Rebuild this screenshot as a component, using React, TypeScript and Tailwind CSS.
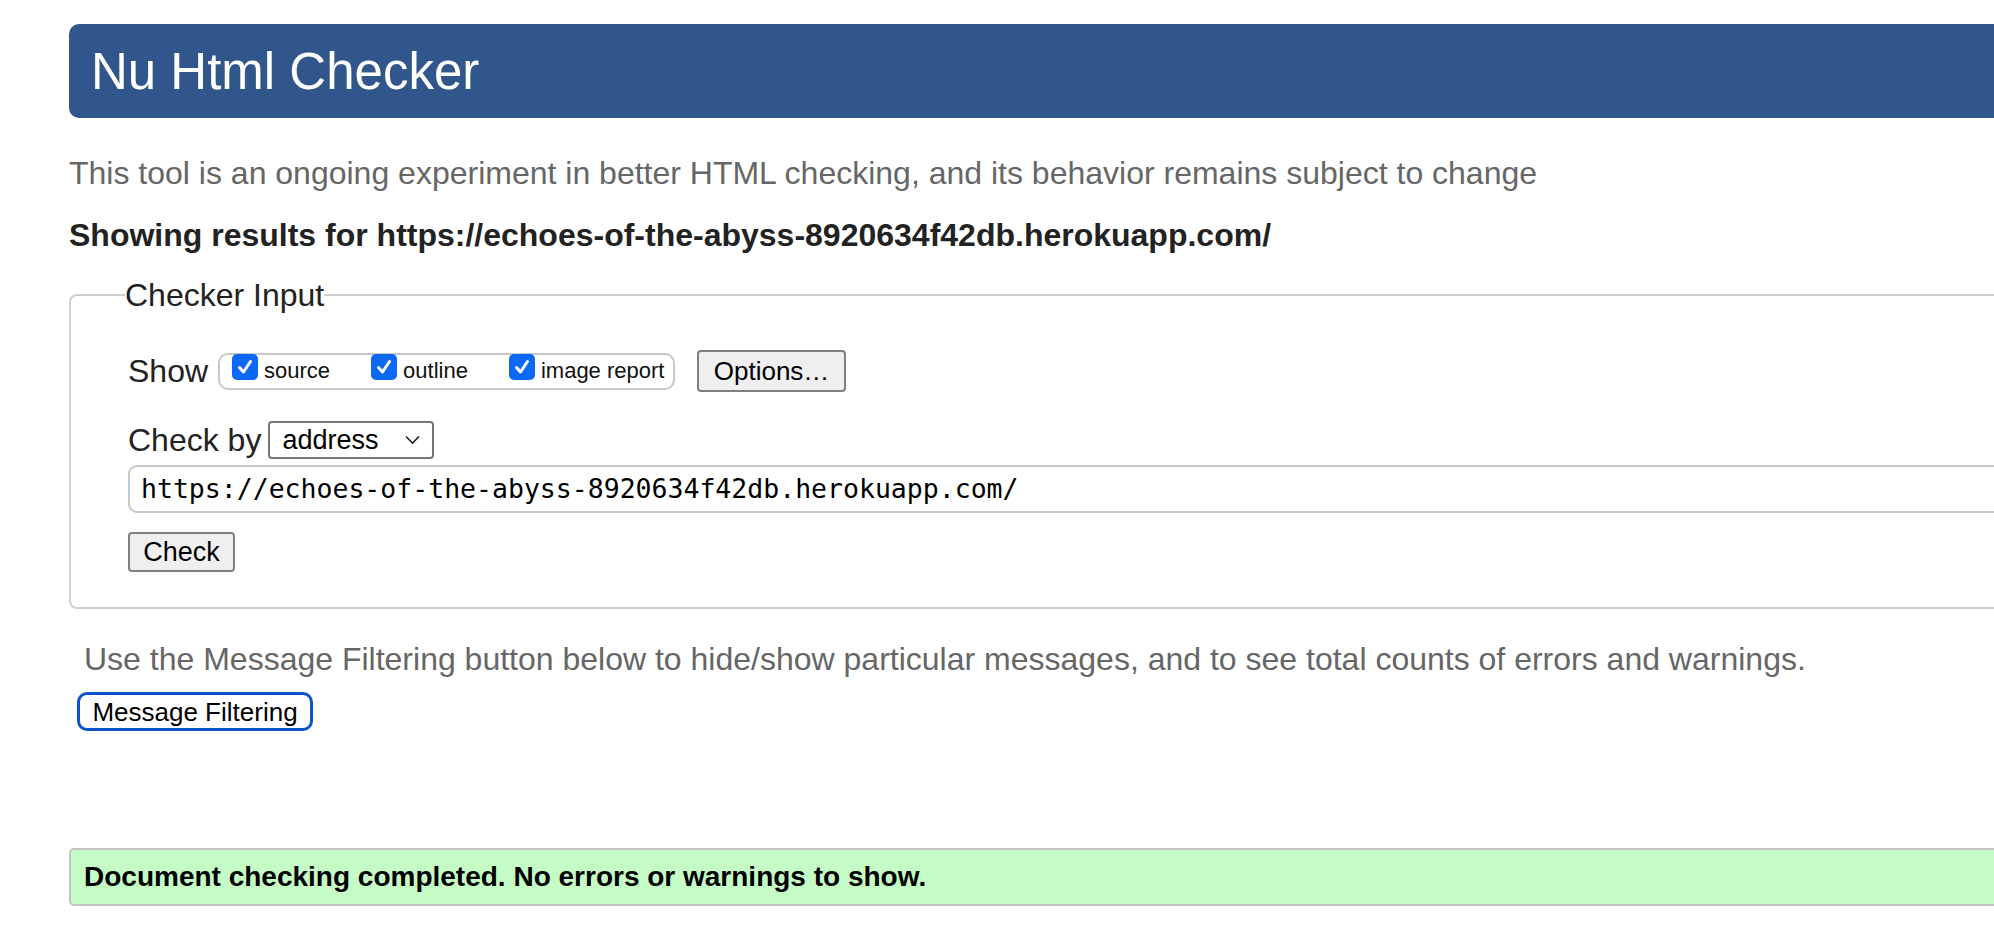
import React from "react";

function Tick() {
  return (
    <span className="-mt-[1px] flex h-[26px] w-[26px] shrink-0 items-center justify-center rounded-[5px] bg-[#0b69f5]">
      <svg width="18" height="18" viewBox="0 0 18 18" fill="none">
        <path d="M3.5 9.5 L7.5 14 L14.5 3.5" stroke="white" strokeWidth="3" strokeLinecap="round" strokeLinejoin="round" />
      </svg>
    </span>
  );
}

function Opt({ label }: { label: string }) {
  return (
    <div className="flex items-start">
      <Tick />
      <span className="ml-[6px] mt-[3px] text-[22px] leading-[26px] text-[#111]">{label}</span>
    </div>
  );
}

export default function App() {
  return (
    <div className="h-[930px] w-[1994px] overflow-hidden bg-white font-['Liberation_Sans',Arial,sans-serif] text-[#222]">
      <div className="w-[2300px] pl-[69px] pt-[24px]">
        <div className="flex h-[94px] items-center rounded-l-[10px] bg-[#30568b] pl-[22px]">
          <h1 className="mt-[2px] text-[51px] leading-[60px] text-white">Nu Html Checker</h1>
        </div>

        <p className="mt-[35px] text-[32px] leading-[40px] text-[#666]">
          This tool is an ongoing experiment in better HTML checking, and its behavior remains subject to change
        </p>
        <p className="mt-[22px] text-[32px] font-bold leading-[40px] text-[#222]">
          Showing results for https://echoes-of-the-abyss-8920634f42db.herokuapp.com/
        </p>

        <fieldset className="mt-[20px] rounded-[8px] border-2 border-[#cfcfcf] px-[57px] pb-[35px]">
          <legend className="-ml-[3px] px-0 text-[32px] leading-[40px] text-[#222]">Checker Input</legend>

          <div className="mt-[35px] flex items-center">
            <span className="text-[32px] leading-[40px]">Show</span>
            <div className="ml-[10px] flex h-[37px] w-[457px] items-start gap-[41px] rounded-[10px] border-2 border-[#c8c8c8] pl-[12px]">
              <Opt label="source" />
              <Opt label="outline" />
              <Opt label="image report" />
            </div>
            <button className="ml-[22px] h-[42px] w-[149px] rounded-[4px] border-2 border-[#808080] bg-[#efefef] text-[26px] leading-[30px] text-black">
              Options…
            </button>
          </div>

          <div className="mt-[28px] flex items-center">
            <span className="text-[32px] leading-[40px]">Check by</span>
            <div className="ml-[7px] flex h-[38px] w-[166px] items-center justify-between rounded-[4px] border-2 border-[#767676] bg-white pl-[12px] pr-[12px]">
              <span className="text-[27px] leading-[30px] text-black">address</span>
              <svg width="15" height="10" viewBox="0 0 15 10" fill="none">
                <path d="M1 1.5 L7.5 8 L14 1.5" stroke="#222" strokeWidth="1.6" />
              </svg>
            </div>
          </div>

          <div className="mt-[5px] flex h-[48px] items-center rounded-[9px] border-2 border-[#c8c8c8] pl-[11px]">
            <span className="font-['DejaVu_Sans_Mono',monospace] text-[26.5px] leading-[32px] text-black">
              https://echoes-of-the-abyss-8920634f42db.herokuapp.com/
            </span>
          </div>

          <button className="mt-[19px] h-[40px] w-[107px] rounded-[4px] border-2 border-[#808080] bg-[#efefef] text-[27px] leading-[30px] text-black">
            Check
          </button>
        </fieldset>

        <p className="mt-[30px] pl-[15px] text-[32px] leading-[40px] text-[#666]">
          Use the Message Filtering button below to hide/show particular messages, and to see total counts of errors and warnings.
        </p>
        <button className="ml-[8px] mt-[13px] h-[39px] w-[236px] rounded-[10px] border-[3px] border-[#0a55cc] bg-white text-[26px] leading-[30px] text-black">
          Message Filtering
        </button>

        <div className="mt-[117px] flex h-[58px] items-center rounded-[5px] border-2 border-[#c4c4c4] bg-[#c5fcc5] pl-[13px]">
          <span className="text-[28px] font-bold leading-[34px] text-black">
            Document checking completed. No errors or warnings to show.
          </span>
        </div>
      </div>
    </div>
  );
}
